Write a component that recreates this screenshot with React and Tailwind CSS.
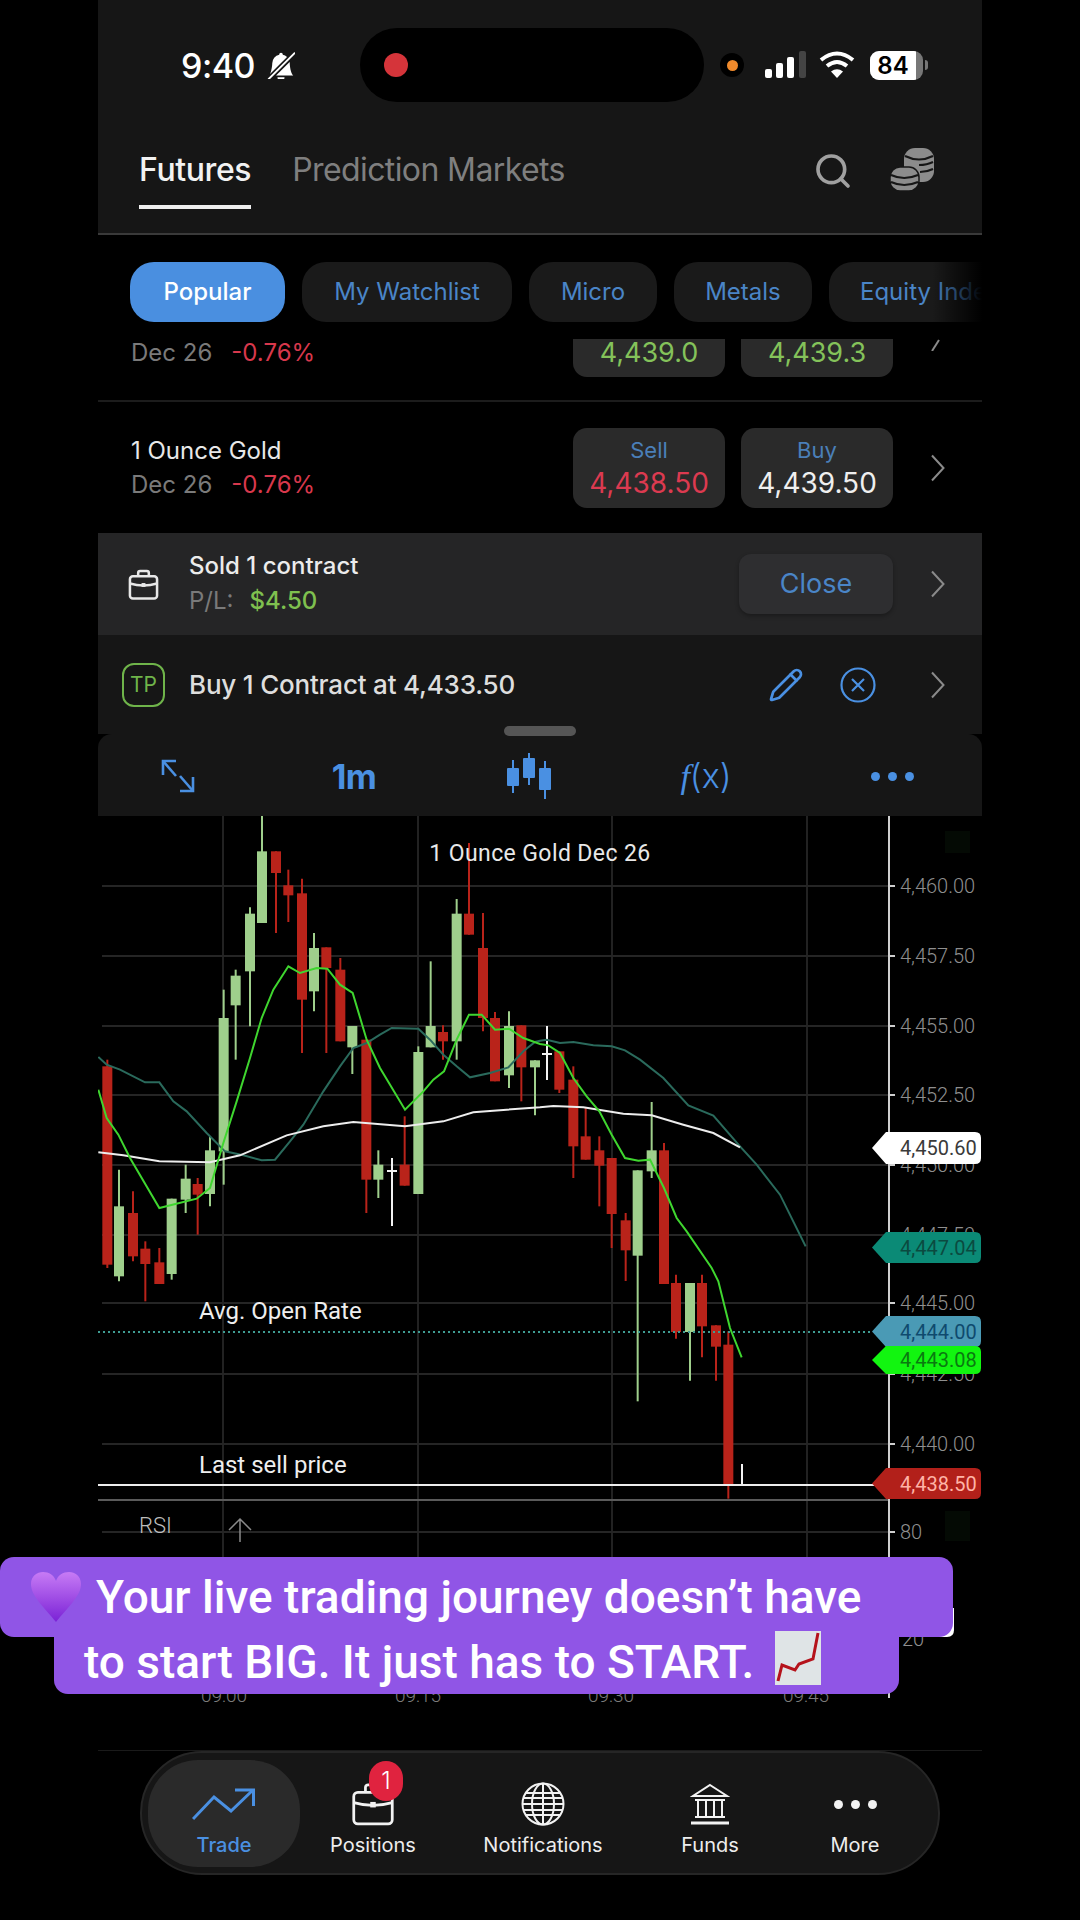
import React from 'react';
import { Search, Pencil } from 'lucide-react';
import { BsBellSlashFill } from 'react-icons/bs';

// chart data was read off in crops, so each block keeps its crop origin
const at = (ox, oy) => (x, y) => [ox + x / 3, oy + y / 3];
const left = at(90, 820);
const right = at(540, 820);
const low = at(540, 1270);

const RED = '#b9231a';
const GREEN = '#9fcf8c';

// [x, bodyTop, bodyBottom, wickTop, wickBottom, color]
const rawCandles = [
  [left, 52, 745, 1340, 725, 1350, RED],
  [left, 87, 1165, 1375, 1055, 1390, GREEN],
  [left, 129, 1185, 1315, 1120, 1330, RED],
  [left, 166, 1292, 1338, 1270, 1450, RED],
  [left, 208, 1333, 1398, 1290, 1398, RED],
  [left, 245, 1142, 1368, 1142, 1385, GREEN],
  [left, 287, 1082, 1145, 1040, 1185, GREEN],
  [left, 323, 1098, 1130, 1080, 1250, RED],
  [left, 360, 997, 1128, 955, 1165, GREEN],
  [left, 401, 600, 1000, 515, 1100, GREEN],
  [left, 437, 473, 562, 455, 725, GREEN],
  [left, 480, 287, 460, 268, 625, GREEN],
  [left, 516, 100, 315, -6, 315, GREEN],
  [left, 558, 100, 165, 100, 345, RED],
  [left, 595, 202, 232, 155, 312, RED],
  [left, 636, 226, 545, 182, 705, RED],
  [left, 672, 390, 520, 345, 580, GREEN],
  [left, 709, 388, 450, 388, 705, RED],
  [left, 751, 455, 670, 420, 670, RED],
  [left, 787, 624, 688, 624, 768, GREEN],
  [left, 829, 665, 1085, 665, 1185, RED],
  [left, 865, 1040, 1085, 997, 1140, GREEN],
  [left, 944, 1040, 1103, 895, 1103, RED],
  [left, 985, 702, 1128, 685, 1128, GREEN],
  [left, 1022, 624, 688, 430, 688, GREEN],
  [left, 1059, 642, 670, 622, 725, RED],
  [left, 1100, 287, 670, 243, 725, GREEN],
  [left, 1137, 287, 350, 75, 350, RED],
  [left, 1179, 390, 600, 285, 640, RED],
  [left, 1215, 600, 790, 582, 790, RED],
  [left, 1257, 624, 772, 580, 810, GREEN],
  [left, 1294, 622, 748, 622, 850, RED],
  [left, 1335, 727, 748, 727, 892, GREEN],
  [right, 58, 700, 815, 700, 825, RED],
  [right, 100, 785, 985, 745, 1080, RED],
  [right, 137, 955, 1025, 870, 1025, RED],
  [right, 178, 997, 1043, 955, 1165, RED],
  [right, 215, 1020, 1188, 1020, 1290, RED],
  [right, 257, 1207, 1297, 1185, 1389, RED],
  [right, 293, 1057, 1313, 1057, 1750, GREEN],
  [right, 335, 997, 1060, 852, 1080, GREEN],
  [right, 372, 997, 1398, 975, 1398, RED],
  [low, 408, 45, 192, 20, 212, RED],
  [low, 450, 45, 192, 45, 338, GREEN],
  [low, 486, 45, 175, 20, 268, RED],
  [low, 528, 172, 236, 172, 338, RED],
  [low, 565, 230, 652, 190, 692, RED],
];

const candles = rawCandles.map(([o, x, bt, bb, wt, wb, color]) => ({
  x: o(x, 0)[0],
  bt: o(0, bt)[1],
  bb: o(0, bb)[1],
  wt: o(0, wt)[1],
  wb: o(0, wb)[1],
  color,
}));

const toPoints = (o, pts) => pts.map(([x, y]) => o(x, y).join(',')).join(' ');

const brightLine = [
  toPoints(left, [[25,815],[50,900],[85,950],[120,1020],[208,1170],[320,1142],[360,1110],[400,975],[440,850],[480,720],[515,600],[550,515],[595,445],[630,465],[680,450],[712,452],[750,500],[788,525],[830,665],[870,750],[945,875],[1000,820],[1030,785],[1062,760],[1100,665],[1137,590],[1175,590],[1215,635],[1257,632],[1300,660],[1350,678]]),
  toPoints(right, [[25,682],[60,705],[100,780],[140,835],[178,880],[215,950],[255,1020],[295,1028],[330,1025],[372,1110],[410,1200],[440,1240],[515,1350]]),
  toPoints(low, [[535,40],[570,180],[605,268]]),
].join(' ');

const tealLine = [
  toPoints(left, [[25,717],[50,740],[90,755],[165,793],[208,793],[250,850],[290,880],[350,945],[405,1000],[460,1012],[515,1027],[555,1025],[600,970],[640,920],[700,820],[750,745],[790,690],[830,675],[870,650],[905,630],[985,632],[1020,665],[1060,710],[1100,745],[1140,778],[1200,765],[1255,748],[1300,700],[1335,672],[1350,668]]),
  toPoints(right, [[20,665],[60,675],[100,672],[160,682],[215,685],[255,697],[300,725],[370,780],[445,862],[520,893],[600,985],[650,1040],[720,1130],[797,1285]]),
].join(' ');

const whiteLine = [
  toPoints(left, [[25,1003],[100,1012],[208,1030],[360,1033],[450,1012],[590,952],[700,925],[790,912],[945,925],[1060,910],[1150,883],[1250,875],[1350,868]]),
  toPoints(right, [[40,864],[130,868],[250,887],[335,892],[430,920],[520,945],[600,988]]),
].join(' ');

const gridY = [888, 958, 1028, 1097, 1167, 1237, 1305, 1376, 1446, 1534];
const gridX = [223, 418, 612, 807];
const axisLabels = [
  ['4,460.00', 888], ['4,457.50', 958], ['4,455.00', 1028], ['4,452.50', 1097],
  ['4,450.00', 1167], ['4,447.50', 1237], ['4,445.00', 1305], ['4,442.50', 1376],
  ['4,440.00', 1446], ['80', 1534],
];
const times = [['09:00', 224], ['09:15', 418], ['09:30', 611], ['09:45', 806]];

const tags = [
  { label: '4,450.60', top: 1134, bottom: 1166, fill: '#ffffff', text: '#3a3a3a' },
  { label: '4,447.04', top: 1234, bottom: 1265, fill: '#0b8a76', text: '#0b4a40' },
  { label: '4,444.00', top: 1318, bottom: 1349, fill: '#4a9ab5', text: '#0f4a6e' },
  { label: '4,443.08', top: 1348, bottom: 1376, fill: '#12f510', text: '#0a7a10' },
  { label: '4,438.50', top: 1470, bottom: 1501, fill: '#b2201a', text: '#ffb3a6' },
];

const Chevron = ({ color = '#8a8a8a' }) => (
  <svg width="15" height="28" viewBox="0 0 15 28" fill="none" stroke={color} strokeWidth="2" className="shrink-0">
    <path d="M2 1.5 L13.5 14 L2 26.5" />
  </svg>
);

const BriefcaseIcon = ({ size, color = '#e8e8e8', stroke = 2.4 }) => (
  <svg width={size} height={size} viewBox="0 0 32 32" fill="none" stroke={color} strokeWidth={stroke} className="shrink-0">
    <rect x="2" y="7.5" width="28" height="23" rx="3" />
    <path d="M10.5 7.5 V4 a2 2 0 0 1 2-2 h7 a2 2 0 0 1 2 2 V7.5" />
    <path d="M2 15 Q16 19 30 15" />
    <rect x="14" y="14.5" width="4" height="4" fill={color} stroke="none" />
  </svg>
);

const CoinsIcon = () => (
  <svg width="44" height="44" viewBox="0 0 44 44" className="shrink-0">
    <g fill="#8c8c8c">
      <rect x="14" y="1" width="30" height="34" rx="11" />
      <rect x="0" y="20" width="29" height="24" rx="10" stroke="#161616" strokeWidth="1.5" />
    </g>
    <g fill="none" stroke="#161616" strokeWidth="2">
      <path d="M15 9 Q29 16 43 9" />
      <path d="M29 18 Q37 18 43 15" />
      <path d="M30 25 Q37 25 43 22" />
      <path d="M1 28 Q14 34 28 28" />
      <path d="M1 35 Q14 41 28 35" />
    </g>
  </svg>
);

const CandleIcon = () => (
  <svg width="46" height="46" viewBox="508 748 46 46" fill="#4a90e2" className="shrink-0">
    <rect x="513" y="755" width="2" height="33" />
    <rect x="508" y="763" width="12" height="18" rx="1" />
    <rect x="529" y="748" width="2" height="32" />
    <rect x="524" y="753" width="12" height="20" rx="1" />
    <rect x="545" y="756" width="2" height="38" />
    <rect x="540" y="763" width="12" height="22" rx="1" />
  </svg>
);

const ExpandIcon = () => (
  <svg width="34" height="34" viewBox="162 754 34 34" fill="none" stroke="#4a90e2" strokeWidth="2.6" className="shrink-0">
    <path d="M164 770 V756 H177" />
    <path d="M164 756 L177 771" />
    <path d="M181 771 L194 786" />
    <path d="M181 786 H194 V772" />
  </svg>
);

const Signal = () => (
  <svg width="42" height="28" viewBox="0 0 42 28" className="shrink-0">
    <rect x="0" y="18" width="7" height="9" rx="2" fill="#fff" />
    <rect x="11" y="12" width="7" height="15" rx="2" fill="#fff" />
    <rect x="22" y="6" width="7" height="21" rx="2" fill="#fff" />
    <rect x="34" y="0" width="7" height="27" rx="2" fill="#444" />
  </svg>
);

const Wifi = () => (
  <svg width="36" height="28" viewBox="0 0 36 28" fill="none" stroke="#fff" strokeWidth="4" className="shrink-0">
    <path d="M2 9 Q18 -4 34 9" />
    <path d="M8 15 Q18 7 28 15" />
    <path d="M18 27 L12 20.5 Q18 16 24 20.5 Z" fill="#fff" stroke="none" />
  </svg>
);

const Globe = () => (
  <svg width="44" height="44" viewBox="0 0 44 44" fill="none" stroke="#f2f2f2" strokeWidth="2" className="shrink-0">
    <circle cx="22" cy="22" r="20.5" />
    <ellipse cx="22" cy="22" rx="11" ry="20.5" />
    <path d="M22 1.5 V42.5 M1.5 22 H42.5 M5 11 H39 M5 33 H39 M2.5 16 H41.5 M2.5 28 H41.5" />
  </svg>
);

const Bank = () => (
  <svg width="40" height="42" viewBox="0 0 40 42" fill="none" stroke="#f2f2f2" strokeWidth="2" className="shrink-0">
    <path d="M20 2 L37 13 H3 Z" />
    <path d="M5 17 H35 M8 17 V34 M16 17 V34 M24 17 V34 M32 17 V34 M5 34 H35" />
    <path d="M1 40 H39" strokeWidth="3" />
  </svg>
);

const TrendUp = () => (
  <svg width="64" height="34" viewBox="194 785 64 34" fill="none" stroke="#4a90e2" strokeWidth="3" className="shrink-0">
    <path d="M195 817 L216 795 L233 809 L255 788" />
    <path d="M237 788 H255.5 V804" />
  </svg>
);

const Heart = () => (
  <svg width="52" height="52" viewBox="0 0 52 52" className="shrink-0">
    <defs>
      <linearGradient id="heart" x1="0" y1="0" x2="0" y2="1">
        <stop offset="0" stopColor="#c77bf5" />
        <stop offset="1" stopColor="#7a22d6" />
      </linearGradient>
    </defs>
    <path d="M26 51 C14 36 1 25 1 13 C1 5 7 1 13 1 C19 1 24 4 26 10 C28 4 33 1 39 1 C45 1 51 5 51 13 C51 25 38 36 26 51 Z" fill="url(#heart)" />
  </svg>
);

const ChartEmoji = () => (
  <svg width="46" height="54" viewBox="0 0 46 54" className="shrink-0">
    <rect x="0" y="0" width="46" height="54" fill="#dfe4e6" />
    <path d="M3 50 L7 34 L20 39 L24 33 L38 28 L43 2" fill="none" stroke="#b5121b" strokeWidth="3" />
  </svg>
);

const Chip = ({ active, children, className = '' }) => (
  <div className={`h-[60px] rounded-[24px] flex items-center justify-center shrink-0 text-[24px] ${active ? 'bg-[#4a8fe0] text-white font-medium' : 'bg-[#1a1a1a] text-[#4a85c7]'} ${className}`}>
    {children}
  </div>
);

const PriceChart = () => (
  <svg width="884" height="934" viewBox="98 818 884 934" className="block">
    <rect x="945" y="833" width="25" height="22" fill="#040a04" />
    <rect x="945" y="1513" width="25" height="30" fill="#040a04" />
    {gridX.map((x) => (
      <line key={x} x1={x} x2={x} y1="818" y2="1690" stroke="#222" strokeWidth="2" />
    ))}
    {gridY.map((y) => (
      <line key={y} x1="102" x2="889" y1={y} y2={y} stroke="#252525" strokeWidth="2" />
    ))}
    <line x1="98" x2="889" y1="1502" y2="1502" stroke="#5a5a5a" strokeWidth="2" />
    <line x1="889" x2="889" y1="818" y2="1700" stroke="#cfcfcf" strokeWidth="2" />
    {gridY.map((y) => (
      <line key={y} x1="889" x2="895" y1={y} y2={y} stroke="#cfcfcf" strokeWidth="2" />
    ))}
    {axisLabels.map(([t, y]) => (
      <text key={t} x="900" y={y} dominantBaseline="central" className="fill-[#8f8f8f] text-[20px] font-light font-['Roboto',sans-serif]">{t}</text>
    ))}

    {candles.map((c, i) => (
      <g key={i}>
        <line x1={c.x} x2={c.x} y1={c.wt} y2={c.wb} stroke={c.color} strokeWidth="2" />
        <rect x={c.x - 5} y={c.bt} width="10" height={c.bb - c.bt} fill={c.color} />
      </g>
    ))}
    {/* doji candles are plain white */}
    <g stroke="#f2f2f2" strokeWidth="2">
      <line x1="392" x2="392" y1="1160" y2="1228" />
      <line x1="387" x2="397" y1="1173" y2="1173" />
      <line x1="547" x2="547" y1="1028" y2="1082" />
      <line x1="542" x2="552" y1="1056" y2="1056" />
      <line x1="742" x2="742" y1="1466" y2="1487" />
    </g>

    <polyline points={tealLine} fill="none" stroke="#2a6a5c" strokeWidth="2" />
    <polyline points={whiteLine} fill="none" stroke="#ededed" strokeWidth="2" />
    <polyline points={brightLine} fill="none" stroke="#3fd62f" strokeWidth="2" />

    <line x1="98" x2="872" y1="1334" y2="1334" stroke="#3f9d93" strokeWidth="2" strokeDasharray="2 3" />
    <line x1="98" x2="886" y1="1487" y2="1487" stroke="#ededed" strokeWidth="2" />

    <text x="540" y="855" textAnchor="middle" dominantBaseline="central" className="fill-[#e8e8e8] text-[23px] tracking-[0.4px] font-['Roboto',sans-serif]">1 Ounce Gold Dec 26</text>
    <text x="199" y="1313" dominantBaseline="central" className="fill-[#eeeeee] text-[24px] font-['Roboto',sans-serif]">Avg. Open Rate</text>
    <text x="199" y="1467" dominantBaseline="central" className="fill-[#eeeeee] text-[24px] font-['Roboto',sans-serif]">Last sell price</text>
    <text x="139" y="1527" dominantBaseline="central" className="fill-[#bdbdbd] text-[22px] font-light font-['Roboto',sans-serif]">RSI</text>
    <path d="M240 1544 V1521 M229 1532 L240 1521 L251 1532" fill="none" stroke="#8a8a8a" strokeWidth="1.5" />

    {tags.map((t) => {
      const mid = (t.top + t.bottom) / 2;
      return (
        <g key={t.label}>
          <path d={`M872 ${mid} L886 ${t.top} H975 Q981 ${t.top} 981 ${t.top + 6} V${t.bottom - 6} Q981 ${t.bottom} 975 ${t.bottom} H886 Z`} fill={t.fill} />
          <text x="900" y={mid} dominantBaseline="central" fill={t.text} className="text-[20px] font-['Roboto',sans-serif]">{t.label}</text>
        </g>
      );
    })}

    <path d="M900 1610 H954 V1632 Q954 1639 947 1639 H900 Z" fill="#ffffff" />
    <text x="902" y="1641" dominantBaseline="central" className="fill-[#8f8f8f] text-[20px] font-light font-['Roboto',sans-serif]">20</text>
    {times.map(([t, x]) => (
      <text key={t} x={x} y="1697" textAnchor="middle" dominantBaseline="central" className="fill-[#7c7c7c] text-[19px] font-light font-['Roboto',sans-serif]">{t}</text>
    ))}
  </svg>
);

const NavItem = ({ icon, label, width, active }) => (
  <div className={`${width} h-[107px] flex flex-col items-center ${active ? 'bg-[#2a2a2a] rounded-[50px]' : ''}`}>
    <div className="h-[70px] pt-[19px] flex items-center justify-center relative">{icon}</div>
    <span className={`text-[20px] leading-[24px] mt-[3px] ${active ? 'text-[#4a90e2] font-medium' : 'text-[#ededed]'}`}>{label}</span>
  </div>
);

export default function App() {
  return (
    <div className="w-[1080px] h-[1920px] bg-black overflow-hidden relative font-['Inter',sans-serif]">
      <div className="ml-[98px] w-[884px]">
        {/* header */}
        <header className="h-[235px] bg-[#161616] border-b-2 border-[#3a3a3a]">
          <div className="pt-[28px] h-[102px] flex items-center">
            <span className="ml-[83px] w-[78px] text-[34px] font-medium text-white tracking-[-0.5px]">9:40</span>
            <BsBellSlashFill className="ml-[8px] shrink-0 text-white text-[28px]" />
            <div className="ml-[65px] w-[344px] h-[74px] bg-black rounded-[37px] flex items-center pl-[24px]">
              <div className="w-[24px] h-[24px] rounded-full bg-[#d5343a]" />
            </div>
            <div className="ml-[16px] w-[24px] h-[24px] rounded-full bg-black flex items-center justify-center">
              <div className="w-[11px] h-[11px] rounded-full bg-[#f08a2c]" />
            </div>
            <div className="ml-[21px]"><Signal /></div>
            <div className="ml-[12px]"><Wifi /></div>
            <div className="ml-[15px] w-[53px] h-[29px] rounded-[9px] bg-[#777] overflow-hidden">
              <div className="w-[46px] h-full bg-white text-black text-[24px] leading-[29px] font-semibold text-center">84</div>
            </div>
            <div className="ml-[2px] w-[3px] h-[10px] rounded-r-full bg-[#777]" />
          </div>
          <div className="flex items-start pl-[41px] pt-[49px]">
            <div className="flex flex-col">
              <span className="text-[32px] leading-[38px] font-medium text-[#f2f2f2] tracking-[-0.4px]">Futures</span>
              <div className="mt-[16px] h-[4px] bg-[#efefef]" />
            </div>
            <span className="ml-[41px] text-[32px] leading-[38px] text-[#7f7f7f] tracking-[-0.6px]">Prediction Markets</span>
            <Search size={40} strokeWidth={2.2} className="ml-auto text-[#a0a0a0] shrink-0" />
            <div className="ml-[37px] mr-[48px] -mt-[4px]"><CoinsIcon /></div>
          </div>
        </header>

        {/* filter chips */}
        <div className="h-[104px] pt-[27px] pl-[32px] flex items-start gap-[17px] overflow-hidden relative">
          <Chip active className="w-[155px]">Popular</Chip>
          <Chip className="w-[210px]">My Watchlist</Chip>
          <Chip className="w-[128px]">Micro</Chip>
          <Chip className="w-[138px]">Metals</Chip>
          <Chip className="w-[200px] justify-start pl-[31px]">Equity Index</Chip>
          <div className="absolute right-0 top-0 bottom-0 w-[50px] bg-gradient-to-r from-transparent to-black" />
        </div>

        {/* instruments */}
        <div className="h-[63px] flex items-start pl-[33px] border-b-2 border-[#1c1c1c] overflow-hidden">
          <div className="mt-[-1px] text-[24px] leading-[30px]">
            <span className="text-[#7a7a7a]">Dec 26</span>
            <span className="ml-[19px] text-[#d8384c]">-0.76%</span>
          </div>
          <div className="ml-auto flex gap-[16px]">
            <div className="w-[152px] h-[38px] bg-[#2a2a2a] rounded-b-[14px] text-[#84c25a] text-[27px] text-center leading-[28px]">4,439.0</div>
            <div className="w-[152px] h-[38px] bg-[#2a2a2a] rounded-b-[14px] text-[#84c25a] text-[27px] text-center leading-[28px]">4,439.3</div>
          </div>
          <svg width="15" height="12" viewBox="0 0 15 12" fill="none" stroke="#8a8a8a" strokeWidth="2" className="ml-[37px] mr-[37px] shrink-0">
            <path d="M2 12 L9 1" />
          </svg>
        </div>
        <div className="h-[131px] flex items-center pl-[33px]">
          <div className="flex flex-col text-[24px]">
            <span className="leading-[34px] text-[#e8e8e8]">1 Ounce Gold</span>
            <div className="leading-[34px]">
              <span className="text-[#7a7a7a]">Dec 26</span>
              <span className="ml-[19px] text-[#d8384c]">-0.76%</span>
            </div>
          </div>
          <div className="ml-auto flex gap-[16px]">
            <div className="w-[152px] h-[80px] bg-[#2a2a2a] rounded-[14px] flex flex-col items-center justify-center">
              <span className="text-[22px] leading-[30px] text-[#4a7fb8]">Sell</span>
              <span className="text-[28px] leading-[36px] text-[#dc3a50]">4,438.50</span>
            </div>
            <div className="w-[152px] h-[80px] bg-[#2a2a2a] rounded-[14px] flex flex-col items-center justify-center">
              <span className="text-[22px] leading-[30px] text-[#4a7fb8]">Buy</span>
              <span className="text-[28px] leading-[36px] text-[#efefef]">4,439.50</span>
            </div>
          </div>
          <div className="ml-[37px] mr-[37px]"><Chevron /></div>
        </div>

        {/* open position */}
        <div className="h-[102px] bg-[#252526] flex items-center pl-[30px]">
          <BriefcaseIcon size={31} stroke={2.6} />
          <div className="ml-[30px] flex flex-col">
            <span className="text-[24px] leading-[34px] font-medium text-[#ececec]">Sold 1 contract</span>
            <div className="leading-[36px] text-[24px]">
              <span className="text-[#7a7a7a]">P/L:</span>
              <span className="ml-[16px] text-[#7fc04f] font-medium">$4.50</span>
            </div>
          </div>
          <div className="ml-auto w-[154px] h-[60px] rounded-[12px] bg-[#2e2e30] shadow-[0_2px_4px_rgba(0,0,0,0.3)] flex items-center justify-center text-[27px] text-[#4a85c7]">Close</div>
          <div className="ml-[37px] mr-[37px]"><Chevron /></div>
        </div>

        {/* take profit */}
        <div className="h-[99px] bg-[#161616] flex items-center pl-[24px]">
          <div className="w-[43px] h-[44px] rounded-[12px] border-2 border-[#6fb44a] flex items-center justify-center text-[21px] text-[#6fb44a]">TP</div>
          <span className="ml-[24px] text-[26px] font-medium text-[#dedede] tracking-[-0.2px]">Buy 1 Contract at 4,433.50</span>
          <Pencil size={36} strokeWidth={1.8} className="ml-auto text-[#4a90e2] shrink-0" />
          <svg width="36" height="36" viewBox="0 0 36 36" fill="none" stroke="#4a90e2" strokeWidth="2.2" className="ml-[36px] shrink-0">
            <circle cx="18" cy="18" r="16.5" />
            <path d="M12 12 L24 24 M24 12 L12 24" />
          </svg>
          <div className="ml-[54px] mr-[37px]"><Chevron /></div>
        </div>

        {/* chart toolbar */}
        <div className="relative h-[82px] bg-[#161616] rounded-t-[14px]">
          <div className="absolute left-[406px] -top-[8px] w-[72px] h-[10px] rounded-full bg-[#555]" />
          <div className="ml-[-8px] w-[892px] h-full grid grid-cols-[176px_176px_176px_176px_176px] items-center justify-items-center pt-[2px]">
            <ExpandIcon />
            <span className="text-[34px] font-bold text-[#4a90e2] tracking-[-0.5px]">1m</span>
            <CandleIcon />
            <div className="text-[34px] text-[#4a90e2]">
              <span className="font-['Liberation_Serif',serif] italic">f</span>
              <span className="font-light">(x)</span>
            </div>
            <div className="ml-[20px] flex gap-[8px]">
              <div className="w-[9px] h-[9px] rounded-full bg-[#4a90e2]" />
              <div className="w-[9px] h-[9px] rounded-full bg-[#4a90e2]" />
              <div className="w-[9px] h-[9px] rounded-full bg-[#4a90e2]" />
            </div>
          </div>
        </div>

        <PriceChart />

        {/* bottom navigation */}
        <div className="h-[168px] border-t border-[#1a1a1a]">
          <nav className="ml-[42px] w-[800px] h-[124px] rounded-[62px] bg-[#161616] border-2 border-[#262626] flex items-center pl-[6px]">
            <NavItem active width="w-[152px]" icon={<TrendUp />} label="Trade" />
            <NavItem width="w-[146px]" label="Positions" icon={
              <>
                <BriefcaseIcon size={44} stroke={2} color="#f2f2f2" />
                <div className="absolute -right-[8px] top-[1px] w-[34px] h-[40px] rounded-full bg-[#e0233f] text-white text-[24px] font-light flex items-center justify-center">1</div>
              </>
            } />
            <NavItem width="w-[194px]" icon={<Globe />} label="Notifications" />
            <NavItem width="w-[140px]" icon={<Bank />} label="Funds" />
            <NavItem width="w-[150px]" label="More" icon={
              <div className="flex gap-[8px]">
                <div className="w-[9px] h-[9px] rounded-full bg-[#f2f2f2]" />
                <div className="w-[9px] h-[9px] rounded-full bg-[#f2f2f2]" />
                <div className="w-[9px] h-[9px] rounded-full bg-[#f2f2f2]" />
              </div>
            } />
          </nav>
        </div>
      </div>

      {/* video caption over the app */}
      <div className="absolute left-0 top-[1557px] w-[953px] flex flex-col items-center text-white font-['Roboto',sans-serif] font-medium text-[46px]">
        <div className="w-[953px] h-[80px] bg-[#9055e6] rounded-[14px] flex items-center pl-[30px]">
          <Heart />
          <span className="ml-[14px]">Your live trading journey doesn’t have</span>
        </div>
        <div className="w-[845px] h-[58px] -mt-px bg-[#9055e6] rounded-b-[14px] flex items-center pl-[30px] pb-[6px]">
          <span>to start BIG. It just has to START.</span>
          <div className="ml-[21px] -mt-[8px]"><ChartEmoji /></div>
        </div>
      </div>
    </div>
  );
}
